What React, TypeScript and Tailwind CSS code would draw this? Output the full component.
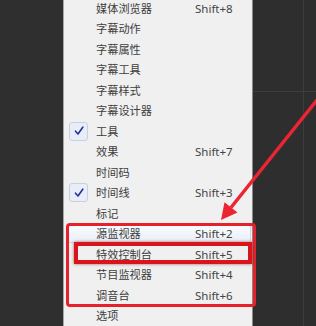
import React from "react";

const items: { label: string; shortcut?: string; checked?: boolean; hover?: boolean }[] = [
  { label: "媒体浏览器", shortcut: "Shift+8" },
  { label: "字幕动作" },
  { label: "字幕属性" },
  { label: "字幕工具" },
  { label: "字幕样式" },
  { label: "字幕设计器" },
  { label: "工具", checked: true },
  { label: "效果", shortcut: "Shift+7" },
  { label: "时间码" },
  { label: "时间线", shortcut: "Shift+3", checked: true },
  { label: "标记" },
  { label: "源监视器", shortcut: "Shift+2", hover: true },
  { label: "特效控制台", shortcut: "Shift+5" },
  { label: "节目监视器", shortcut: "Shift+4" },
  { label: "调音台", shortcut: "Shift+6" },
  { label: "选项" },
];

function Check() {
  return (
    <svg width="12" height="12" viewBox="0 0 12 12">
      <path d="M2.5 6.2 L5 9 L9.8 2.2" fill="none" stroke="#26309a" strokeWidth="1.6" strokeLinecap="round" strokeLinejoin="round" />
    </svg>
  );
}

export default function App() {
  return (
    <div className="relative w-[316px] h-[326px] overflow-hidden flex bg-[#2e2e2e]" style={{ fontFamily: '"Noto Sans", "Noto Sans CJK SC", sans-serif' }}>
      <div className="w-[63px] h-full bg-[#2f2f2f]" />
      <div className="w-[190px] h-full bg-[#f0f0f0] border-l border-[#a5a5a5] border-r border-r-[#8a8a8a]">
        <div className="mt-[-2px] flex flex-col">
          {items.map((it) => (
            <div key={it.label} className="h-[20.5px] flex items-center pl-[5px] relative">
              {it.hover && (
                <div className="absolute left-[2px] right-[1px] top-[1px] bottom-[1px] rounded-[2px] border border-[#c9d6e6] bg-gradient-to-b from-[#f8fafd] to-[#eaf0f8]" />
              )}
              <div className="w-[19px] h-[19px] flex items-center justify-center relative">
                {it.checked && (
                  <div className="w-[19px] h-[19px] rounded-[3px] border border-[#c4d0e4] bg-[#e8edf7] flex items-center justify-center">
                    <Check />
                  </div>
                )}
              </div>
              <div className="w-[107px] pl-[8px] text-[11.2px] leading-none text-[#3d3d3d] relative" style={{ fontFamily: '"Noto Sans CJK SC", sans-serif' }}>
                {it.label}
              </div>
              {it.shortcut && (
                <div className="text-[11.5px] leading-none text-[#444444] relative">{it.shortcut}</div>
              )}
            </div>
          ))}
        </div>
      </div>
      <div className="flex-1 h-full flex flex-col bg-[#2e2e2e]">
        <div className="h-[91px] flex">
          <div className="w-[51px] border-r border-[#3d3d3d]" />
        </div>
        <div className="flex-1 flex border-t border-[#3d3d3d]">
          <div className="w-[51px] border-r border-[#3d3d3d]" />
        </div>
      </div>

      {/* red boxes */}
      <div className="absolute left-[66px] top-[223px] w-[190px] h-[84px] border-[3px] border-[#e5212b] rounded-[4px] pointer-events-none" />
      <div className="absolute left-[74px] top-[242px] w-[178px] h-[22px] border-[4px] border-[#d9141c] shadow-[0_0_3px_rgba(120,0,0,0.6)] pointer-events-none" />

      {/* arrow */}
      <svg className="absolute left-0 top-0 pointer-events-none" width="316" height="326" viewBox="0 0 316 326">
        <line x1="322" y1="93.8" x2="231" y2="207.5" stroke="#ec2532" strokeWidth="3.5" />
        <polygon points="221,220 237.5,212.6 224.5,202.2" fill="#ec2532" />
      </svg>
    </div>
  );
}
